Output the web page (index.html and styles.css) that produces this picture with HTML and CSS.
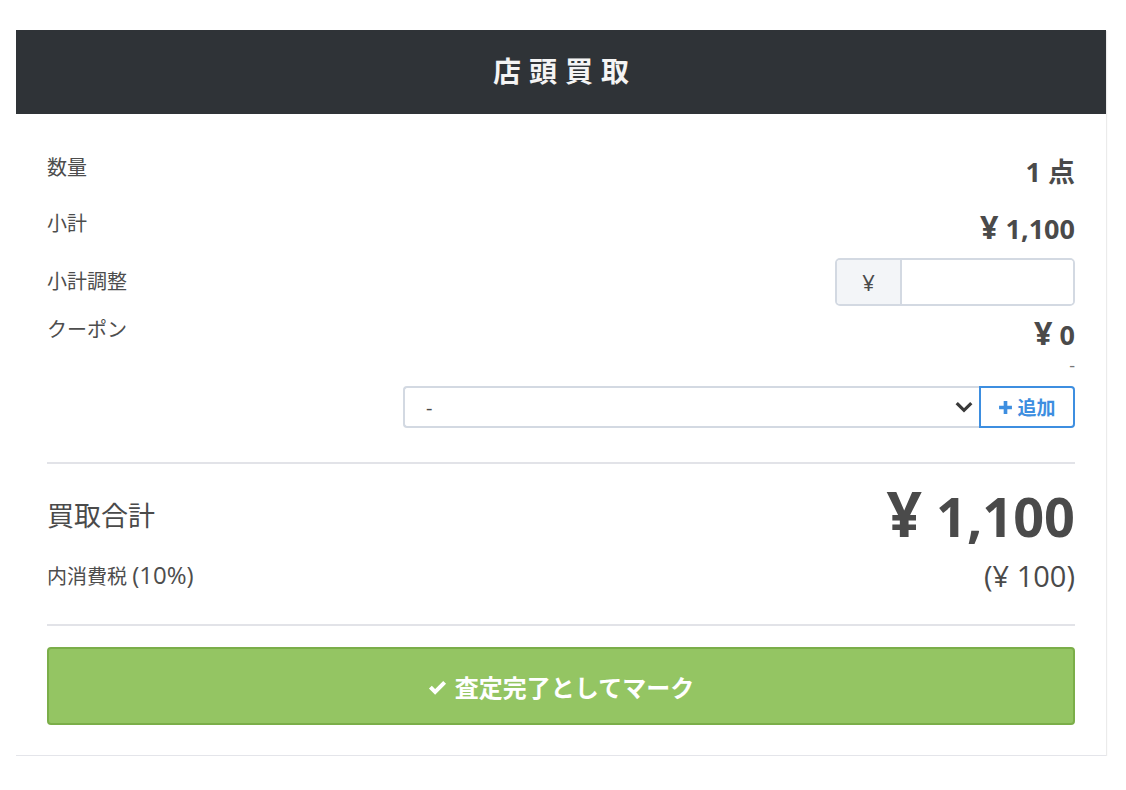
FILE: index.html
```html
<!DOCTYPE html>
<html lang="ja">
<head>
<meta charset="utf-8">
<title>店頭買取</title>
<link rel="stylesheet" href="styles.css">
</head>
<body>
<div class="card">
  <div class="card-header">店頭買取</div>
  <div class="card-body">
    <div class="row">
      <div class="label">数量</div>
      <div class="value">1 点</div>
    </div>
    <div class="row">
      <div class="label">小計</div>
      <div class="value"><span class="yen">¥</span> 1,100</div>
    </div>
    <div class="row row-input">
      <div class="label">小計調整</div>
      <div class="input-group">
        <span class="addon">¥</span>
        <span class="field"></span>
      </div>
    </div>
    <div class="row row-coupon">
      <div class="label">クーポン</div>
      <div class="value"><span class="yen">¥</span> 0</div>
    </div>
    <div class="dash">-</div>
    <div class="select-row">
      <div class="select">
        <span class="select-text">-</span>
        <svg class="chevron" viewBox="0 0 16 16" width="18" height="18"><path d="M2.5 5.5 L8 11 L13.5 5.5" fill="none" stroke="#3a3a3a" stroke-width="2.8" stroke-linecap="square"/></svg>
      </div>
      <div class="add-btn">
        <svg class="plus" viewBox="0 0 14 14" width="15" height="15"><path d="M7 1 V13 M1 7 H13" stroke="#3d8ee0" stroke-width="3.4"/></svg>
        <span>追加</span>
      </div>
    </div>
    <div class="divider div-1"></div>
    <div class="row row-total">
      <div class="total-label">買取合計</div>
      <div class="total-value"><span class="yen">¥</span> 1,100</div>
    </div>
    <div class="row row-tax">
      <div class="label">内消費税 <span class="latin">(10%)</span></div>
      <div class="tax-value">(<span class="yen">¥</span> 100)</div>
    </div>
    <div class="divider div-2"></div>
    <div class="done-btn">
      <svg class="check" viewBox="0 0 16 16" width="19" height="19"><path d="M2 8.5 L6 12.5 L14 4.5" fill="none" stroke="#fff" stroke-width="3.4" stroke-linejoin="miter"/></svg>
      <span>査定完了としてマーク</span>
    </div>
  </div>
</div>
</body>
</html>
```

FILE: styles.css
```css
* { box-sizing: border-box; }
html, body { margin: 0; padding: 0; background: #ffffff; }
body {
  font-family: "Open Sans", "Noto Sans CJK JP", sans-serif;
  color: #4a4a4a;
  padding: 30px 20px 0 16px;
}
.card {
  width: 1090px;
  background: #fff;
  box-shadow: 1px 1px 1px rgba(0, 0, 0, 0.08);
  border-bottom: 1px solid #e4e5ea;
}
.card-header {
  height: 84px;
  padding-bottom: 5px;
  background: #2f3337;
  color: #f4f4f4;
  font-weight: 700;
  font-size: 28px;
  letter-spacing: 8px;
  text-indent: 8px;
  display: flex;
  align-items: center;
  justify-content: center;
}
.card-body {
  padding: 40px 31px 30px 31px;
}
.row {
  display: flex;
  justify-content: space-between;
  align-items: flex-start;
}
.label {
  font-size: 20px;
  line-height: 28px;
  color: #4d4d4d;
}
.latin { font-size: 24px; }
.value {
  font-size: 27px;
  font-weight: 700;
  line-height: 36px;
  color: #4a4a4a;
}
.yen { font-size: 1.2em; line-height: 1; }
.row + .row { margin-top: 20px; }
.row-input {
  margin-top: 11px !important;
  align-items: center;
  height: 48px;
}
.row-coupon { margin-top: 10px !important; }
.input-group {
  display: flex;
  width: 240px;
  height: 48px;
  border: 2px solid #d3d9e2;
  border-radius: 5px;
  overflow: hidden;
}
.addon {
  width: 65px;
  background: #f3f5f8;
  border-right: 2px solid #d3d9e2;
  display: flex;
  align-items: center;
  justify-content: center;
  font-size: 22px;
  color: #4a4a4a;
}
.field { flex: 1; background: #fff; }
.dash {
  text-align: right;
  font-size: 18px;
  line-height: 18px;
  color: #777;
  margin-top: 3px;
}
.select-row {
  display: flex;
  justify-content: flex-end;
  margin-top: 12px;
  height: 42px;
}
.select {
  width: 576px;
  height: 42px;
  border: 2px solid #d3d9e2;
  border-right: none;
  border-radius: 4px 0 0 4px;
  display: flex;
  align-items: center;
  justify-content: space-between;
  padding: 0 6px 0 21px;
  font-size: 20px;
}
.select-text { color: #4a4a4a; }
.add-btn {
  width: 96px;
  height: 42px;
  border: 2px solid #3d8ee0;
  border-radius: 0 4px 4px 0;
  display: flex;
  align-items: center;
  justify-content: center;
  gap: 4px;
  color: #3d8ee0;
  font-size: 19px;
  font-weight: 700;
}
.divider {
  height: 2px;
  background: #e2e3e8;
}
.div-1 { margin-top: 34px; }
.row-total {
  margin-top: 18px !important;
  align-items: center;
  height: 68px;
}
.total-label {
  font-size: 27px;
  line-height: 36px;
  color: #4a4a4a;
}
.total-value {
  font-size: 54px;
  font-weight: 700;
  line-height: 68px;
  color: #4a4a4a;
}
.total-value .yen { font-size: 1.15em; }
.row-tax {
  margin-top: 8px !important;
  align-items: center;
  height: 36px;
}
.tax-value {
  font-size: 29px;
  line-height: 36px;
  color: #4a4a4a;
}
.tax-value .yen { font-size: 1em; }
.div-2 { margin-top: 30px; }
.done-btn {
  margin-top: 21px;
  height: 78px;
  background: #94c563;
  border: 2px solid #7bae49;
  border-radius: 4px;
  display: flex;
  align-items: center;
  justify-content: center;
  gap: 8px;
  color: #fff;
  font-size: 24px;
  font-weight: 700;
}
```
